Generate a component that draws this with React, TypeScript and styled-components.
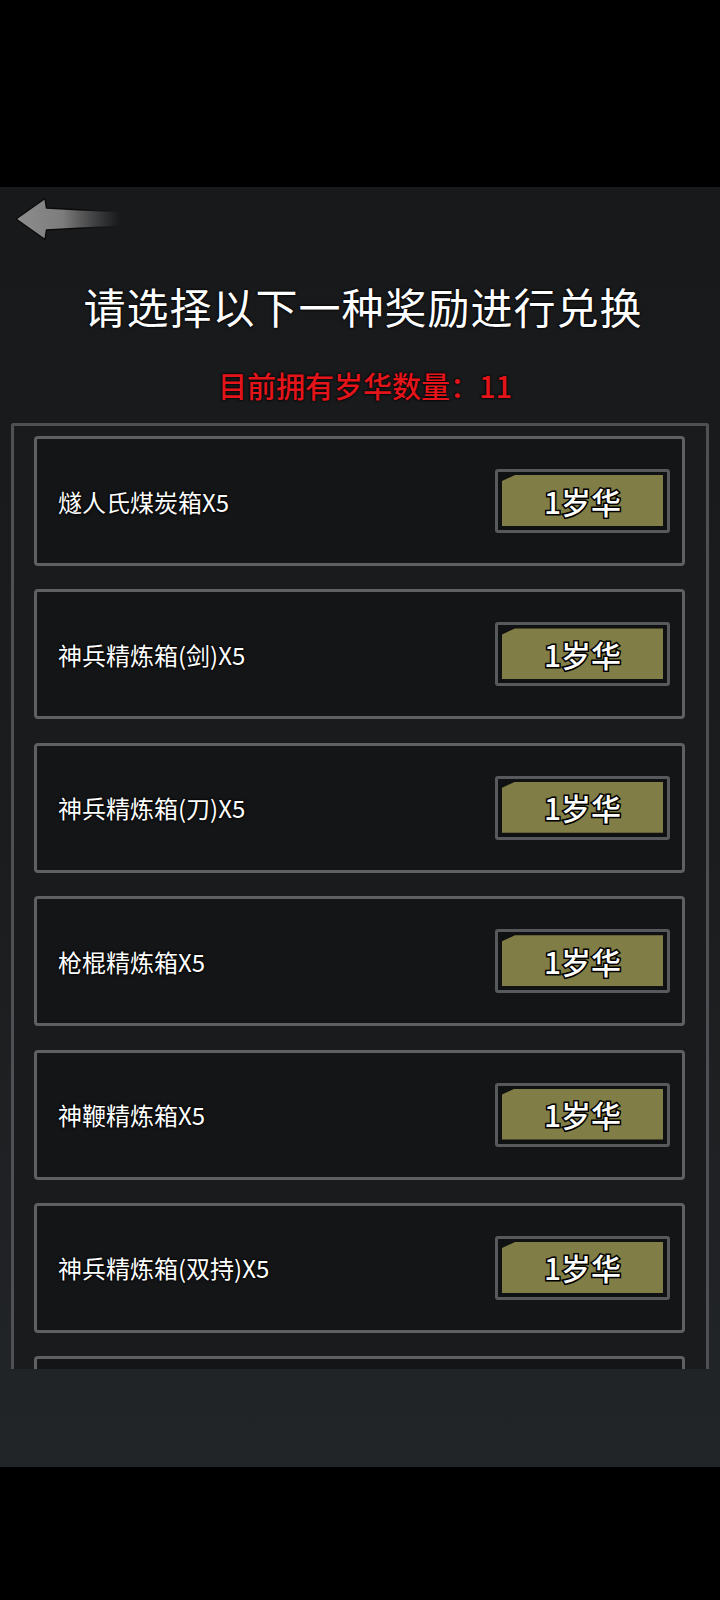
import React from "react"
import styled, { createGlobalStyle } from "styled-components"

const GlobalStyle = createGlobalStyle`
  html, body {
    margin: 0;
    padding: 0;
    background: #000;
  }
  * {
    box-sizing: border-box;
  }
`

const FONT = `"Noto Sans CJK SC", "Noto Sans", sans-serif`

interface IReward {
  id: number
  name: string
  cost: number
}

const REWARDS: IReward[] = [
  { id: 1, name: "燧人氏煤炭箱X5", cost: 1 },
  { id: 2, name: "神兵精炼箱(剑)X5", cost: 1 },
  { id: 3, name: "神兵精炼箱(刀)X5", cost: 1 },
  { id: 4, name: "枪棍精炼箱X5", cost: 1 },
  { id: 5, name: "神鞭精炼箱X5", cost: 1 },
  { id: 6, name: "神兵精炼箱(双持)X5", cost: 1 },
]

const Page = styled.div`
  width: 720px;
  height: 1600px;
  display: flex;
  flex-direction: column;
  background: #000;
  font-family: ${FONT};
  overflow: hidden;
`

const Bar = styled.div<{ $h: number }>`
  height: ${(p) => p.$h}px;
  flex-shrink: 0;
  background: #000;
`

const Screen = styled.div`
  height: 1280px;
  flex-shrink: 0;
  display: flex;
  flex-direction: column;
  align-items: center;
  background: linear-gradient(180deg, #18191b 0%, #1b1c1e 50%, #222528 100%);
`

const BackRow = styled.div`
  width: 100%;
  height: 54px;
  padding: 10px 0 0 14px;
`

const BackButton = styled.button`
  border: none;
  background: none;
  padding: 0;
  width: 110px;
  height: 44px;
  cursor: pointer;
  display: block;
`

const Title = styled.h1`
  margin: 40px 0 0 6px;
  font-size: 42px;
  line-height: 50px;
  font-weight: 400;
  color: #fff;
  letter-spacing: 1px;
  text-shadow: 0 0 3px #000, 0 0 2px #000;
`

const Owned = styled.div`
  margin: 36px 0 0 10px;
  font-size: 29px;
  line-height: 36px;
  font-weight: 500;
  color: #e3141a;
  text-shadow: 0 0 3px #000, 0 0 2px #000;
`

const Panel = styled.div`
  margin-top: 20px;
  width: 698px;
  height: 946px;
  border: 3px solid #4e5053;
  border-bottom: none;
  border-radius: 3px 3px 0 0;
  background: #1a1b1d;
  overflow: hidden;
  display: flex;
  flex-direction: column;
  gap: 23.4px;
  padding: 10px 21px 0 20px;
`

const Card = styled.div`
  flex-shrink: 0;
  height: 130px;
  border: 3px solid #5f6063;
  border-radius: 4px;
  background: #141517;
  display: flex;
  align-items: center;
  justify-content: space-between;
  padding: 0 12px 0 21px;
`

const Label = styled.span`
  font-size: 24px;
  color: #fff;
  text-shadow: 0 0 3px #000, 0 0 2px #000, 0 0 1px #000;
`

const CostFrame = styled.button`
  width: 175px;
  height: 64px;
  border: 3px solid #58595c;
  border-radius: 3px;
  background: #101112;
  padding: 3px 4px 4px 4px;
  cursor: pointer;
  display: flex;
`

const CostFill = styled.span`
  flex: 1;
  display: flex;
  align-items: center;
  justify-content: center;
  background: #817d46;
  clip-path: polygon(13px 0, 100% 0, 100% 100%, 0 100%, 0 6px);
  font-family: ${FONT};
  font-size: 30px;
  font-weight: 500;
  color: #fff;
  -webkit-text-stroke: 3px #000;
  paint-order: stroke fill;
  text-shadow: 0 0 2px #000;
`

const BackArrow = () => (
  <svg width="110" height="44" viewBox="0 0 110 44">
    <defs>
      <linearGradient id="shaft" x1="0" y1="0" x2="1" y2="0">
        <stop offset="0" stopColor="#8e8e8e" />
        <stop offset="0.45" stopColor="#7c7c7c" />
        <stop offset="1" stopColor="#6a6a6a" stopOpacity="0" />
      </linearGradient>
      <linearGradient id="edge" x1="0" y1="0" x2="1" y2="0">
        <stop offset="0" stopColor="#0a0a0a" />
        <stop offset="0.6" stopColor="#0a0a0a" />
        <stop offset="1" stopColor="#0a0a0a" stopOpacity="0" />
      </linearGradient>
    </defs>
    <path d="M2 22 L31 1.5 L32.5 11 L106 15 L106 29 L32.5 33 L31 42.5 Z" fill="url(#shaft)" stroke="url(#edge)" strokeWidth="1.5" strokeLinejoin="round" />
  </svg>
)

const App = () => {
  return (
    <Page>
      <GlobalStyle />
      <Bar $h={187} />
      <Screen>
        <BackRow>
          <BackButton aria-label="返回">
            <BackArrow />
          </BackButton>
        </BackRow>
        <Title>请选择以下一种奖励进行兑换</Title>
        <Owned>目前拥有岁华数量：11</Owned>
        <Panel>
          {REWARDS.map((r) => (
            <Card key={r.id}>
              <Label>{r.name}</Label>
              <CostFrame>
                <CostFill>{r.cost}岁华</CostFill>
              </CostFrame>
            </Card>
          ))}
          {/* next entry, scrolled below the fold */}
          <Card aria-hidden />
        </Panel>
      </Screen>
      <Bar $h={133} />
    </Page>
  )
}

export default App
